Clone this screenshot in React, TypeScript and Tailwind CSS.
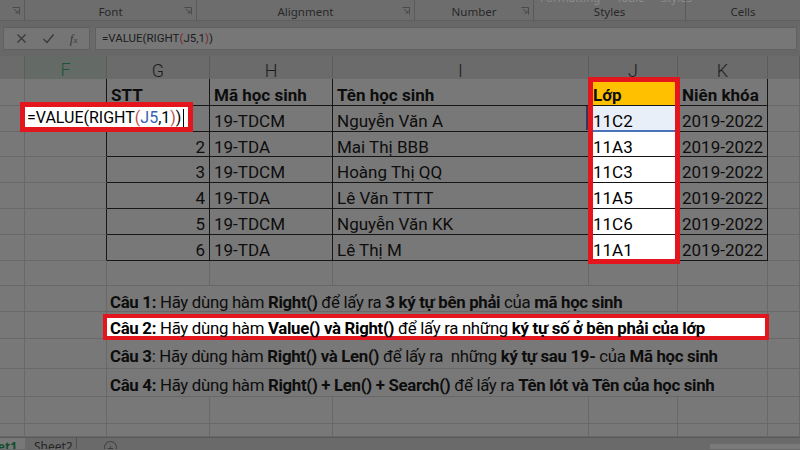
import React from "react";

const GRID = "grid grid-cols-[25px_82px_103px_123px_256px_89px_90px_32px]";
const CELL = "border-r border-b border-[#686868] bg-[#787878]";
const TCELL = "border-r border-b border-[#161616] bg-[#787878] px-[4px] pt-[6px] flex items-center whitespace-nowrap";
const RED = "border-[#e3161d]";

const students = [
  { stt: "", code: "19-TDCM", name: "Nguyễn Văn A", cls: "11C2" },
  { stt: "2", code: "19-TDA", name: "Mai Thị BBB", cls: "11A3" },
  { stt: "3", code: "19-TDCM", name: "Hoàng Thị QQ", cls: "11C3" },
  { stt: "4", code: "19-TDA", name: "Lê Văn TTTT", cls: "11A5" },
  { stt: "5", code: "19-TDCM", name: "Nguyễn Văn KK", cls: "11C6" },
  { stt: "6", code: "19-TDA", name: "Lê Thị M", cls: "11A1" },
];
const rowHeights = ["h-[26px]", "h-[25px]", "h-[26px]", "h-[26px]", "h-[26px]", "h-[26px]"];

function Launcher() {
  return (
    <svg width="8" height="8" viewBox="0 0 8 8" className="absolute right-[4px] bottom-[5px]">
      <path d="M0.5 0.5h7v7" fill="none" stroke="#4a4a4a" strokeWidth="1" />
      <path d="M2 2l4 4M6 3.5V6H3.5" fill="none" stroke="#4a4a4a" strokeWidth="1" />
    </svg>
  );
}

function Ribbon() {
  const groups = [
    { w: "w-[25px]", label: "" },
    { w: "w-[172px]", label: "Font", launch: true },
    { w: "w-[218px]", label: "Alignment", launch: true },
    { w: "w-[119px]", label: "Number", launch: true },
    { w: "w-[152px]", label: "Styles" },
    { w: "flex-1", label: "Cells", last: true },
  ];
  return (
    <div className="h-[21px] flex bg-[#6d6d6d] border-b border-[#5f5f5f] font-['Noto_Sans',sans-serif] text-[11.5px] text-[#282828] overflow-hidden">
      {groups.map((g, i) => (
        <div
          key={i}
          className={`${g.w} relative flex flex-col items-center justify-end pb-[1px] ${g.last ? "" : "border-r border-[#5a5a5a]"}`}
        >
          {i === 4 && (
            <div className="absolute -top-[8px] left-[6px] flex gap-[16px] text-[#8c8c8c] whitespace-nowrap leading-none">
              <span>Formatting</span>
              <span>Table</span>
              <span>Styles</span>
            </div>
          )}
          <span className="leading-none pb-[2px]">{g.label}</span>
          {(g.launch || i === 0) && <Launcher />}
        </div>
      ))}
    </div>
  );
}

function FormulaBar() {
  return (
    <div className="h-[23px] flex gap-[5px] px-[3px] font-['Roboto',sans-serif]">
      <div className="w-[87px] border border-[#606060] bg-[#757575] flex items-center justify-around px-[4px] text-[#3a3a3a]">
        <svg width="11" height="11" viewBox="0 0 11 11">
          <path d="M1.5 1.5l8 8M9.5 1.5l-8 8" stroke="#3a3a3a" strokeWidth="1.3" />
        </svg>
        <svg width="13" height="11" viewBox="0 0 13 11">
          <path d="M1.5 6l3.5 3.5L11.5 1.5" fill="none" stroke="#3a3a3a" strokeWidth="1.4" />
        </svg>
        <span className="font-['Liberation_Serif',serif] italic text-[13px] leading-none">
          f<span className="text-[9px]">x</span>
        </span>
      </div>
      <div className="flex-1 border border-[#606060] bg-[#777777] flex items-center pl-[6px] text-[11.5px] text-[#1c1c1c]">
        =VALUE(RIGHT<span className="text-[#7a2a2a]">(</span>
        <span>J5</span>,1<span className="text-[#7a2a2a]">)</span>)
      </div>
    </div>
  );
}

function ColumnHeaders() {
  const letters = ["", "F", "G", "H", "I", "J", "K", ""];
  return (
    <div className={`${GRID} h-[23px] bg-[#6b6b6b] text-[18px] text-[#1c1c1c] font-['Roboto',sans-serif] font-light`}>
      {letters.map((l, i) => (
        <div
          key={i}
          className={`flex items-center justify-center border-r border-[#5c5c5c] ${
            i === 1 ? "bg-[#646a66] text-[#1c5634] border-b-2 border-b-[#1a5232]" : "border-b border-b-[#5c5c5c]"
          }`}
        >
          {l}
        </div>
      ))}
    </div>
  );
}

function B({ children }: { children: React.ReactNode }) {
  return <b className="font-bold">{children}</b>;
}

const QCELL = `${CELL} flex items-center pl-[3px] pt-[6px] whitespace-pre text-[16.8px] tracking-[-0.3px]`;

export default function App() {
  return (
    <div className="w-[800px] h-[450px] overflow-hidden bg-[#6a6a6a] flex flex-col text-[#0d0d0d]">
      <Ribbon />
      <div className="h-[6px] bg-[#676767]" />
      <FormulaBar />
      <div className="h-[6px] bg-[#676767]" />
      <ColumnHeaders />

      <div className="relative font-['Roboto',sans-serif] text-[17px] leading-none">
        {/* table header */}
        <div className={`${GRID} h-[27px]`}>
          <div className={CELL} />
          <div className={`${CELL} border-r-[#161616]`} />
          <div className={`${TCELL} bg-[#7f6000] font-bold`}>STT</div>
          <div className={`${TCELL} bg-[#7f6000] font-bold`}>Mã học sinh</div>
          <div className={`${TCELL} bg-[#7f6000] font-bold`}>Tên học sinh</div>
          <div className={`${TCELL} bg-[#ffc000] font-bold`}>Lớp</div>
          <div className={`${TCELL} bg-[#7f6000] font-bold`}>Niên khóa</div>
          <div className={CELL} />
        </div>

        {students.map((s, i) => (
          <div key={i} className={`${GRID} ${rowHeights[i]}`}>
            <div className={CELL} />
            <div className={`${CELL} border-r-[#161616] relative`}>
              {i === 0 && (
                <div className={`absolute left-[-5px] top-[-4px] w-[173px] h-[30px] border-[5px] ${RED} bg-white z-10 flex items-center pl-[2px] pt-[2px] whitespace-nowrap text-[16px] text-black`}>
                  =VALUE(RIGHT<span className="text-[#c0504d]">(</span>
                  <span className="text-[#3461b0]">J5</span>,1<span className="text-[#c0504d]">)</span>)
                  <span className="ml-[2px] w-px h-[18px] bg-black" />
                </div>
              )}
            </div>
            <div className={`${TCELL} justify-end`}>{s.stt}</div>
            <div className={TCELL}>{s.code}</div>
            <div className={TCELL}>{s.name}</div>
            <div
              className={`${TCELL} relative ${
                i === 0 ? "bg-[#e9eff8] border-b-2 border-b-[#4a72b8]" : "bg-white"
              } text-black`}
            >
              {i === 0 && <span className="absolute left-[-3px] top-0 bottom-0 w-[2px] bg-[#37355c]" />}
              {s.cls}
            </div>
            <div className={TCELL}>2019-2022</div>
            <div className={CELL} />
          </div>
        ))}

        <div className={`${GRID} h-[25px]`}>
          {Array.from({ length: 8 }).map((_, i) => (
            <div key={i} className={CELL} />
          ))}
        </div>

        {/* Câu 1 */}
        <div className={`${GRID} h-[26px]`}>
          <div className={CELL} />
          <div className={CELL} />
          <div className={`${QCELL} col-span-4 pt-[8px]`}>
            <span>
              <B>Câu 1:</B> Hãy dùng hàm <B>Right()</B> để lấy ra <B>3 ký tự bên phải</B> của <B>mã học sinh</B>
            </span>
          </div>
          <div className={CELL} />
          <div className={CELL} />
        </div>

        {/* Câu 2 */}
        <div className={`${GRID} h-[27px]`}>
          <div className={CELL} />
          <div className={CELL} />
          <div className={`${QCELL} col-span-5 relative`}>
            <div className={`absolute left-[-4px] right-[-2px] top-[2px] bottom-[-2px] border-[4px] ${RED} bg-white`} />
            <span className="relative text-black">
              <B>Câu 2:</B> Hãy dùng hàm <B>Value() và Right()</B> để lấy ra những <B>ký tự số ở bên phải của lớp</B>
            </span>
          </div>
          <div className={CELL} />
        </div>

        {/* Câu 3 */}
        <div className={`${GRID} h-[30px]`}>
          <div className={CELL} />
          <div className={CELL} />
          <div className={`${QCELL} col-span-5`}>
            <span>
              <B>Câu 3</B>: Hãy dùng hàm <B>Right() và Len()</B> để lấy ra  những <B>ký tự sau 19-</B> của <B>Mã học sinh</B>
            </span>
          </div>
          <div className={CELL} />
        </div>

        {/* Câu 4 */}
        <div className={`${GRID} h-[28px]`}>
          <div className={CELL} />
          <div className={CELL} />
          <div className={`${QCELL} col-span-5`}>
            <span>
              <B>Câu 4:</B> Hãy dùng hàm <B>Right() + Len() + Search()</B> để lấy ra <B>Tên lót và Tên của học sinh</B>
            </span>
          </div>
          <div className={CELL} />
        </div>

        {["h-[27px]", "h-[13px]"].map((h, r) => (
          <div key={r} className={`${GRID} ${h}`}>
            {Array.from({ length: 8 }).map((_, i) => (
              <div key={i} className={CELL} />
            ))}
          </div>
        ))}

        {/* highlight around column J */}
        <div className={`absolute left-[588px] top-[-2px] w-[92px] h-[187px] border-[5px] ${RED} pointer-events-none z-10`} />
      </div>

      {/* sheet tabs */}
      <div className="h-[12px] flex bg-[#6a6a6a] border-t border-[#5a5a5a] overflow-hidden font-['Noto_Sans',sans-serif] text-[12px] leading-none">
        <div className="w-[25px] bg-[#787878] overflow-hidden flex justify-end pr-[8px] pt-[3px] font-bold text-[#124d2a] whitespace-nowrap">
          Sheet1
        </div>
        <div className="w-[52px] border-r border-[#4f4f4f] pl-[9px] pt-[3px] text-[#262626]">Sheet2</div>
        <div className="ml-[27px] mt-[3px] w-[13px] h-[13px] rounded-full border border-[#3c3c3c] flex justify-center text-[11px] text-[#3c3c3c]">
          +
        </div>
        <div className="flex-1" />
        <div className="w-[90px] mt-[6px] bg-[#7a7a7a]" />
      </div>
    </div>
  );
}
